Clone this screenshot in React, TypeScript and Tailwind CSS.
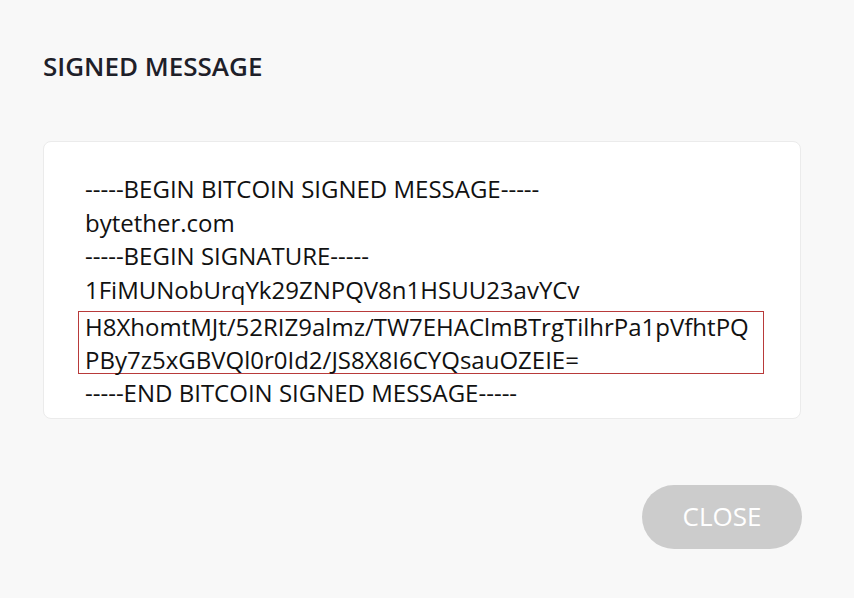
import React from "react";

export default function App() {
  const font = { fontFamily: '"Open Sans", "Noto Sans", sans-serif' };
  return (
    <div className="w-[854px] h-[598px] bg-[#f8f8f8] overflow-hidden" style={font}>
      <div className="pl-[43px] pt-[48px]">
        <h1 className="text-[26px] leading-[36px] font-semibold text-[#1e2029]">
          SIGNED MESSAGE
        </h1>
      </div>
      <div className="ml-[43px] mt-[57px] w-[758px] h-[278px] bg-white border border-[#ebebeb] rounded-[8px] pt-[30px] px-[34px] text-[24px] leading-[33.5px] text-[#111111] overflow-hidden">
        <div className="pl-[7px]">-----BEGIN BITCOIN SIGNED MESSAGE-----</div>
        <div className="pl-[7px]">bytether.com</div>
        <div className="pl-[7px]">-----BEGIN SIGNATURE-----</div>
        <div className="pl-[7px]">1FiMUNobUrqYk29ZNPQV8n1HSUU23avYCv</div>
        <div className="mt-[5px] w-[686px] h-[63px] border border-[#b83a3a] pl-[6px] leading-[33px] whitespace-nowrap">
          <div className="-mt-[2px]">
            <div>H8XhomtMJt/52RIZ9almz/TW7EHAClmBTrgTilhrPa1pVfhtPQ</div>
            <div>PBy7z5xGBVQl0r0Id2/JS8X8I6CYQsauOZEIE=</div>
          </div>
        </div>
        <div className="mt-[2px] pl-[7px]">-----END BITCOIN SIGNED MESSAGE-----</div>
      </div>
      <div className="flex justify-end pr-[52px] mt-[66px]">
        <button className="w-[160px] h-[64px] rounded-full bg-[#cccccc] text-white text-[26px] leading-none pb-[2px]">
          CLOSE
        </button>
      </div>
    </div>
  );
}
